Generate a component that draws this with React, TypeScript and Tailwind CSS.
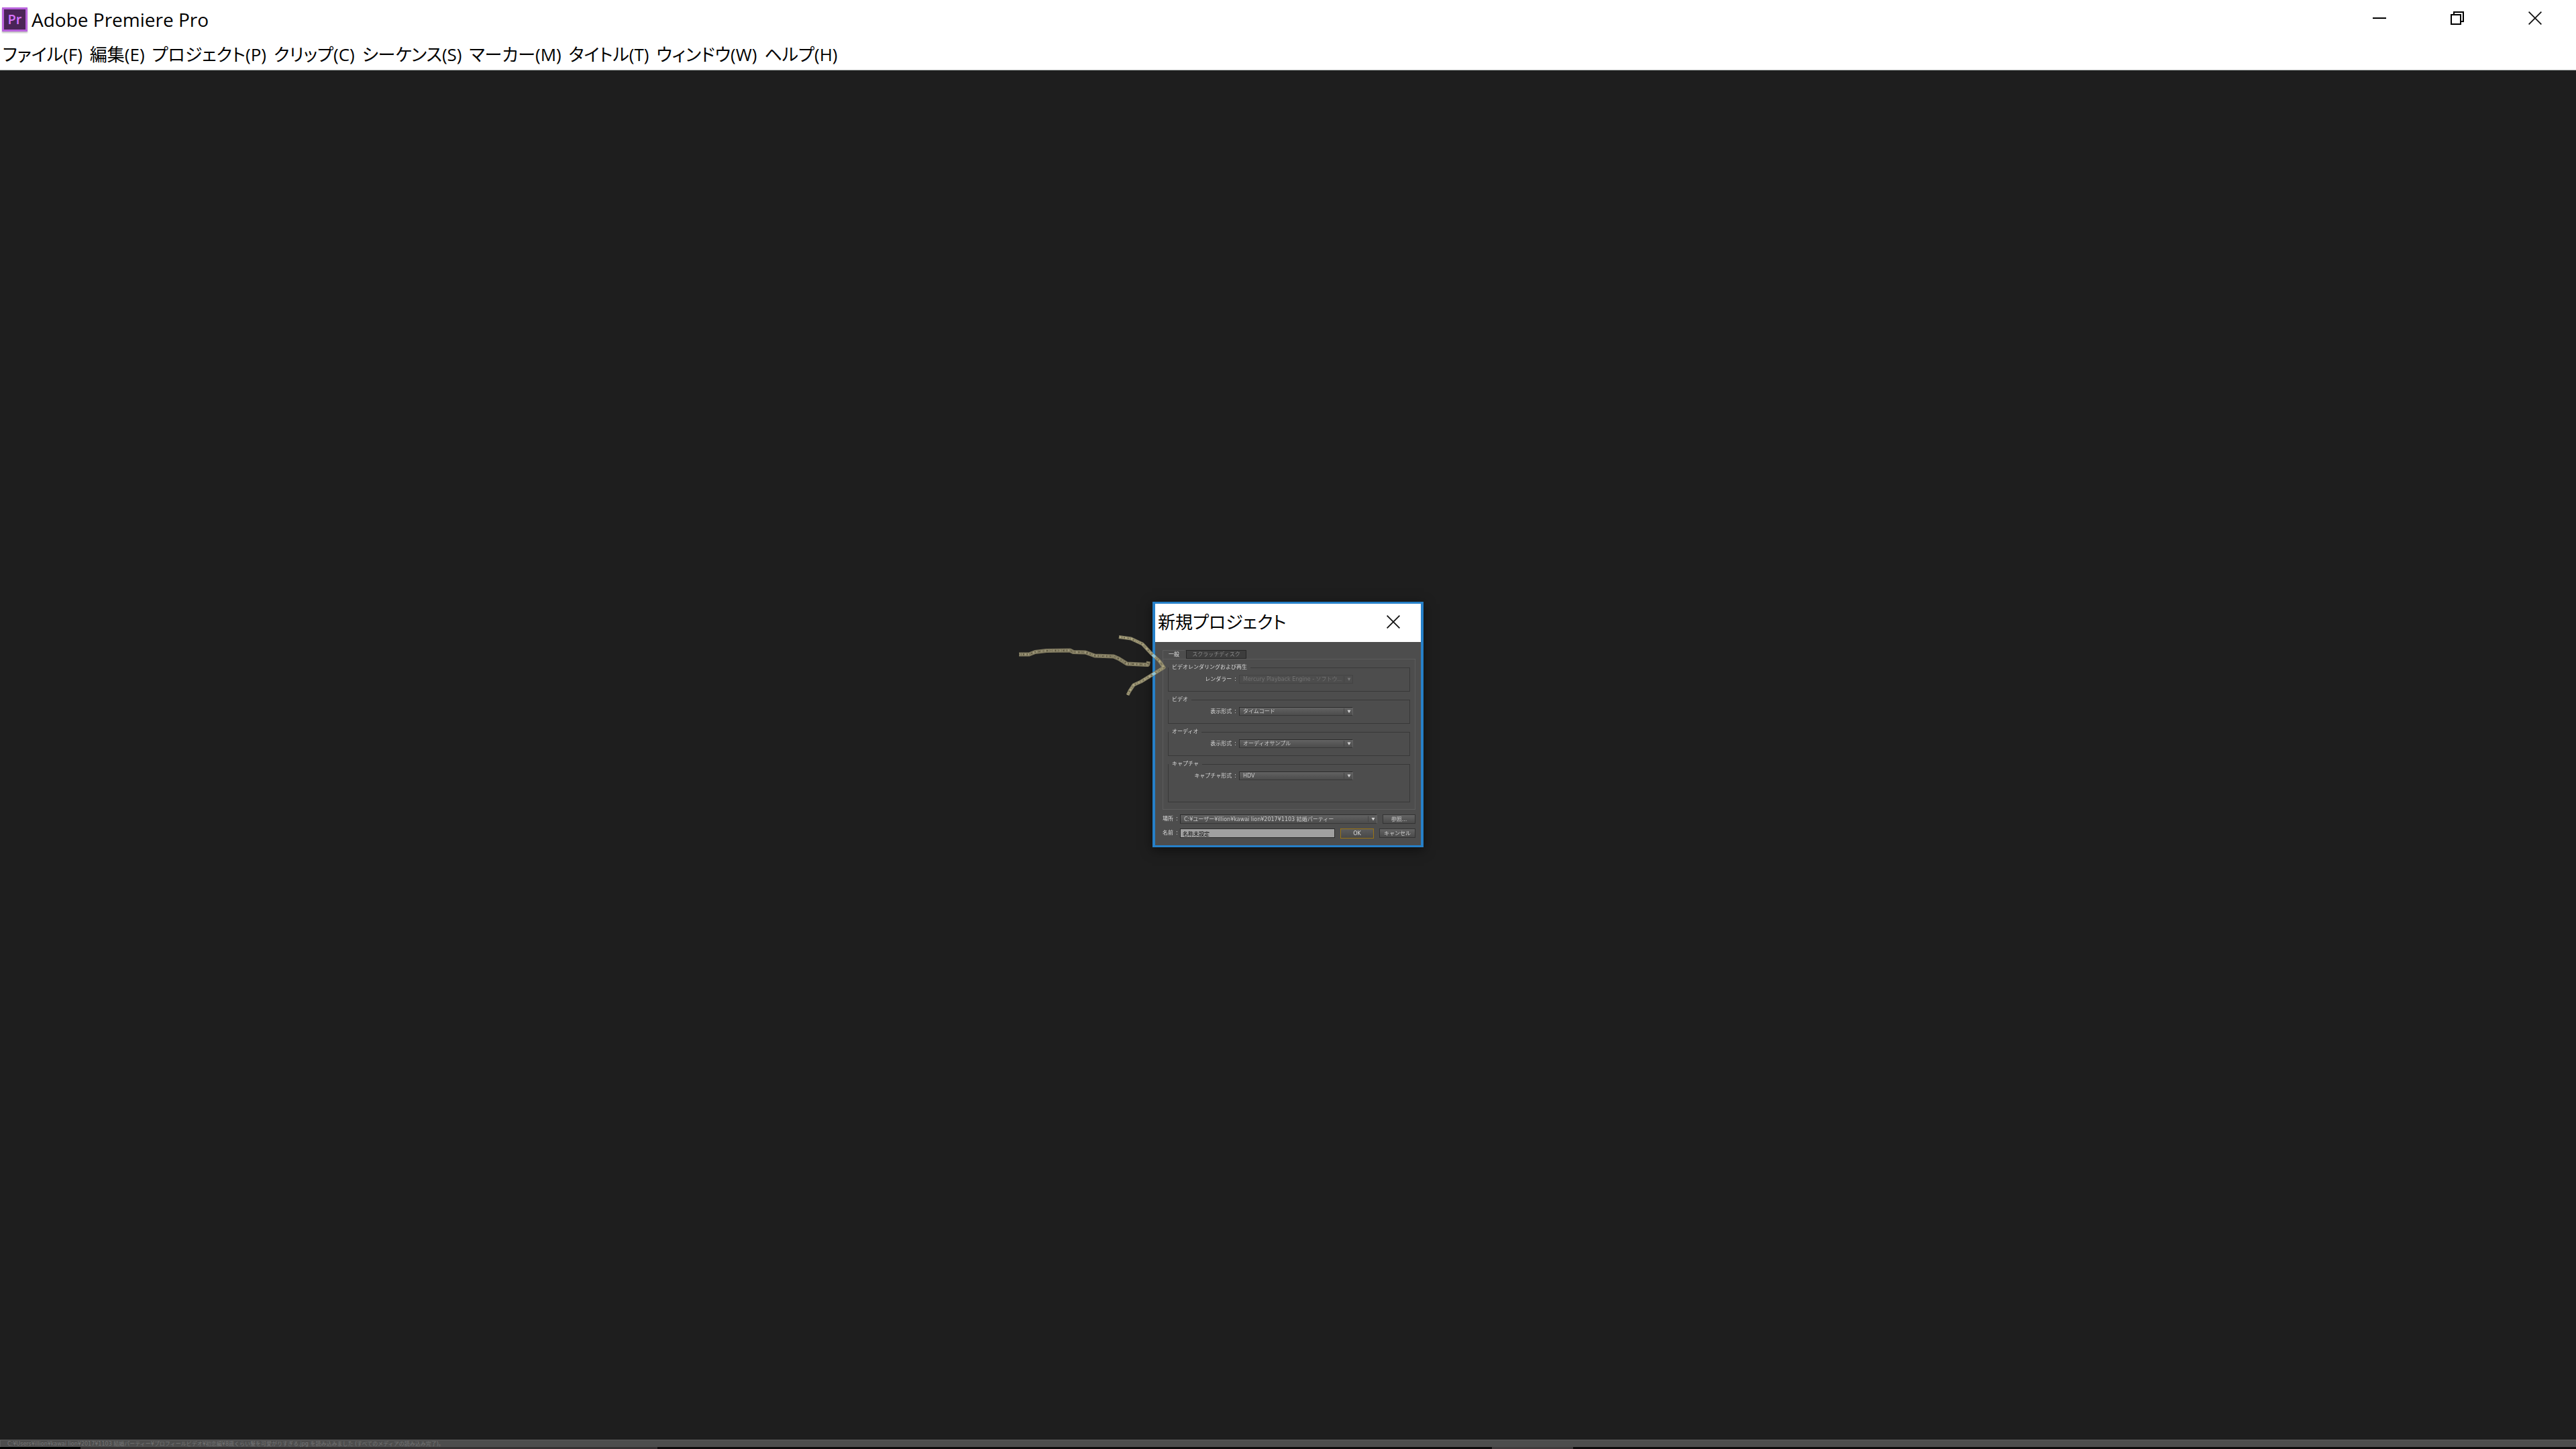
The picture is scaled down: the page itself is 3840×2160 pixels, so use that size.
import type { ReactNode } from "react";

const MENU_ITEMS = [
  "ファイル(F)",
  "編集(E)",
  "プロジェクト(P)",
  "クリップ(C)",
  "シーケンス(S)",
  "マーカー(M)",
  "タイトル(T)",
  "ウィンドウ(W)",
  "ヘルプ(H)",
];

const STATUS_TEXT =
  "C:¥Users¥illion¥kawai lion¥2017¥1103 結婚パーティー¥プロフィールビデオ¥初恋編¥8歳くらい髪を可愛がりすぎる.jpg を読み込みました (すべてのメディアの読み込み完了)。";

function CloseIcon() {
  return (
    <svg width="20" height="20" viewBox="0 0 20 20" fill="none" stroke="#111" strokeWidth="1.8">
      <path d="M0.6 0.6 19.4 19.4M19.4 0.6 0.6 19.4" />
    </svg>
  );
}

function TitleBar() {
  return (
    <div className="flex h-[58px] items-start justify-between">
      <div className="flex h-full items-center gap-1.5 pl-[3px]">
        <div className="flex h-9 w-[38px] items-center justify-center border-[3px] border-[#b963dc] bg-[#4a2457] font-['Open_Sans',sans-serif] text-xl font-semibold leading-none text-[#d673fb] shadow-[0_2px_2px_#00000040]">
          Pr
        </div>
        <h1 className="text-[28px] leading-[40px]">Adobe Premiere Pro</h1>
      </div>
      <div className="flex pr-[3px]">
        <button aria-label="最小化" className="flex h-[54px] w-[116px] items-center justify-center">
          <svg width="20" height="20" viewBox="0 0 20 20" shapeRendering="crispEdges">
            <rect x="0" y="9" width="20" height="2" fill="#000" />
          </svg>
        </button>
        <button aria-label="元に戻す" className="flex h-[54px] w-[116px] items-center justify-center">
          <svg width="20" height="20" viewBox="0 0 20 20" fill="none" stroke="#000" strokeWidth="2" shapeRendering="crispEdges">
            <rect x="1" y="5" width="14" height="14" />
            <path d="M5 5V1h14v14h-4" />
          </svg>
        </button>
        <button aria-label="閉じる" className="flex h-[54px] w-[116px] items-center justify-center">
          <CloseIcon />
        </button>
      </div>
    </div>
  );
}

function MenuBar() {
  return (
    <nav className="flex h-[46px] items-center gap-[11px] pl-1 text-[26px] leading-[40px] [font-feature-settings:'palt']">
      {MENU_ITEMS.map((item) => (
        <button key={item} className="whitespace-nowrap">
          {item}
        </button>
      ))}
    </nav>
  );
}

type DropdownProps = {
  id: string;
  value: string;
  className: string;
  disabled?: boolean;
};

function Dropdown({ id, value, className, disabled }: DropdownProps) {
  return (
    <div className={`relative ${className}`}>
      <select
        id={id}
        disabled={disabled}
        className="block h-full w-full appearance-none border border-[#2c2c2c] border-r-[#636363] border-b-[#383838] bg-linear-to-b from-[#626262] to-[#4c4c4c] pr-4 pl-[5px] text-[8px] leading-[11px] text-[#c8c8c8] disabled:border-[#434343] disabled:bg-none disabled:text-[#737373] disabled:opacity-100"
      >
        <option>{value}</option>
      </select>
      <svg
        className={`pointer-events-none absolute top-0 right-0 h-full ${disabled ? "text-[#777]" : "text-[#d2d2d2]"}`}
        width="14"
        height="13"
        viewBox="0 0 14 13"
      >
        <path d="M0.5 2v9" stroke="#444" />
        <path d="M5.5 4.5h5L8 9z" fill="currentColor" />
      </svg>
    </div>
  );
}

function Group({ title, tall, children }: { title: string; tall?: boolean; children: ReactNode }) {
  return (
    <fieldset className={`border border-[#383838] pt-[5px] ${tall ? "h-[63px]" : "h-[42px]"}`}>
      <legend className="h-3 px-[5px] leading-[12px]">{title}</legend>
      <div className="flex items-center">{children}</div>
    </fieldset>
  );
}

type FieldProps = { id: string; label: string; value: string; disabled?: boolean };

function Field({ id, label, value, disabled }: FieldProps) {
  return (
    <>
      <label htmlFor={id} className="flex w-[105px] justify-end gap-1 pr-1">
        <span>{label}</span>
        <span>:</span>
      </label>
      <Dropdown id={id} value={value} disabled={disabled} className="h-[13px] w-[170px]" />
    </>
  );
}

const BUTTON = "h-[14px] border border-[#333] bg-linear-to-b from-[#646464] to-[#4a4a4a] leading-[11px] text-[#d0d0d0]";

// Hand-drawn arrow that points at the dialog
function Arrow() {
  const shaft = "M19 95.5 34 95.5 43 92 60 90 95 89.5 100 92 118 92.5 132 97.5 160 98.5 168 102 180 109.5 211 111 212 106";
  const head = "M168 69.5 186 72 203 80 217 95 228 105 235 115 214 128 201 136 190 141 184 150 181 156";
  return (
    <svg
      className="pointer-events-none absolute -top-5 -left-[222px]"
      width="260"
      height="180"
      viewBox="0 0 260 180"
      fill="none"
      strokeLinejoin="round"
    >
      <path d={shaft} stroke="#7f795f" strokeWidth="6" />
      <path d={shaft} stroke="#9b9477" strokeWidth="3" strokeDasharray="2 3 1 2 3 2" />
      <path d={shaft} stroke="#5c563f" strokeWidth="2" strokeDasharray="1 5 2 4" />
      <path d={head} stroke="#8b8568" strokeWidth="5" />
      <path d={head} stroke="#b0a882" strokeWidth="2.5" strokeDasharray="3 3 1 2" />
      <path d={head} stroke="#6b654b" strokeWidth="1.5" strokeDasharray="1 6 2 5" />
      <path d="M218 96 222 99.5M222 123 218 126" stroke="#8cc4d8" strokeWidth="4" />
    </svg>
  );
}

function NewProjectDialog() {
  return (
    <div
      role="dialog"
      aria-labelledby="dialog-title"
      className="relative w-[404px] border-x-4 border-y-[3px] border-[#2680c8] bg-[#4d4d4d] shadow-[0_4px_16px_#00000080]"
    >
      <div className="flex h-[57px] items-center justify-between bg-white pr-[31px] pb-1 pl-1">
        <h2 id="dialog-title" className="text-[26px] leading-[40px] text-black [font-feature-settings:'palt']">
          新規プロジェクト
        </h2>
        <button aria-label="閉じる">
          <CloseIcon />
        </button>
      </div>

      <div className="pt-3 pr-2 pb-[11px] pl-[11px] font-['DejaVu_Sans','Noto_Sans_CJK_JP',sans-serif] text-[8px] leading-[12px] text-[#d8d8d8]">
        <div role="tablist" className="flex h-[13px] gap-0.5">
          <button role="tab" aria-selected="true" className="w-[33px] border-t border-l border-[#5c5c5c] text-[#e4e4e4]">
            一般
          </button>
          <button role="tab" aria-selected="false" className="w-[90px] border border-[#262626] bg-[#3d3d3d] leading-[11px] text-[#888]">
            スクラッチディスク
          </button>
        </div>
        <div className="flex flex-col gap-1.5 border border-[#5c5c5c] px-[7px] pt-1.5 pb-[10px]">
          <Group title="ビデオレンダリングおよび再生">
            <Field id="renderer" label="レンダラー" value="Mercury Playback Engine -  ソフトウ..." disabled />
          </Group>
          <Group title="ビデオ">
            <Field id="video-format" label="表示形式" value="タイムコード" />
          </Group>
          <Group title="オーディオ">
            <Field id="audio-format" label="表示形式" value="オーディオサンプル" />
          </Group>
          <Group title="キャプチャ" tall>
            <Field id="capture-format" label="キャプチャ形式" value="HDV" />
          </Group>
        </div>

        <div className="mt-[7px] flex flex-col gap-[7px]">
          <div className="flex h-[14px] items-center">
            <label htmlFor="location" className="flex w-[26px] gap-1">
              <span>場所</span>
              <span>:</span>
            </label>
            <Dropdown
              id="location"
              value="C:¥ユーザー¥illion¥kawai lion¥2017¥1103 結婚パーティー"
              className="h-[14px] flex-1"
            />
            <button className={`ml-2 w-[49px] ${BUTTON}`}>参照...</button>
          </div>
          <div className="flex h-[14px] items-center">
            <label htmlFor="name" className="flex w-[26px] gap-1">
              <span>名前</span>
              <span>:</span>
            </label>
            <input
              id="name"
              defaultValue="名称未設定"
              className="h-[14px] min-w-0 flex-1 border border-[#2c2c2c] bg-[#a0a0a0] px-[3px] text-[8px] leading-[11px] text-black"
            />
            <button className="ml-2 h-[15px] w-[50px] border border-[#9a7416] bg-linear-to-b from-[#5c5c5c] to-[#484848] leading-[11px]">
              OK
            </button>
            <button className={`ml-2 w-[54px] ${BUTTON}`}>キャンセル</button>
          </div>
        </div>
      </div>
      <Arrow />
    </div>
  );
}

export default function App() {
  return (
    <div className="flex min-h-screen flex-col bg-[#1e1e1e] font-['Open_Sans','Noto_Sans_CJK_JP',sans-serif]">
      <header className="border-b border-[#9a9f9d] bg-white text-black">
        <TitleBar />
        <MenuBar />
      </header>

      <main className="flex-1">
        <div className="fixed inset-0 grid place-items-center">
          <NewProjectDialog />
        </div>
      </main>

      <footer>
        <div className="h-[11px] overflow-hidden border-t border-l border-[#5c5c5c] bg-[#4d4d4d] pl-[10px] font-['DejaVu_Sans','Noto_Sans_CJK_JP',sans-serif] text-[8px] leading-[12px] whitespace-nowrap text-[#757575]">
          {STATUS_TEXT}
        </div>
        {/* top edge of the taskbar */}
        <div className="flex h-[3px] bg-[#0d0a0b]">
          <div className="w-[120px] bg-black" />
          <div className="w-[860px] bg-[#353132]" />
          <div className="ml-[1244px] w-[121px] bg-[#403b3c]" />
        </div>
      </footer>
    </div>
  );
}
